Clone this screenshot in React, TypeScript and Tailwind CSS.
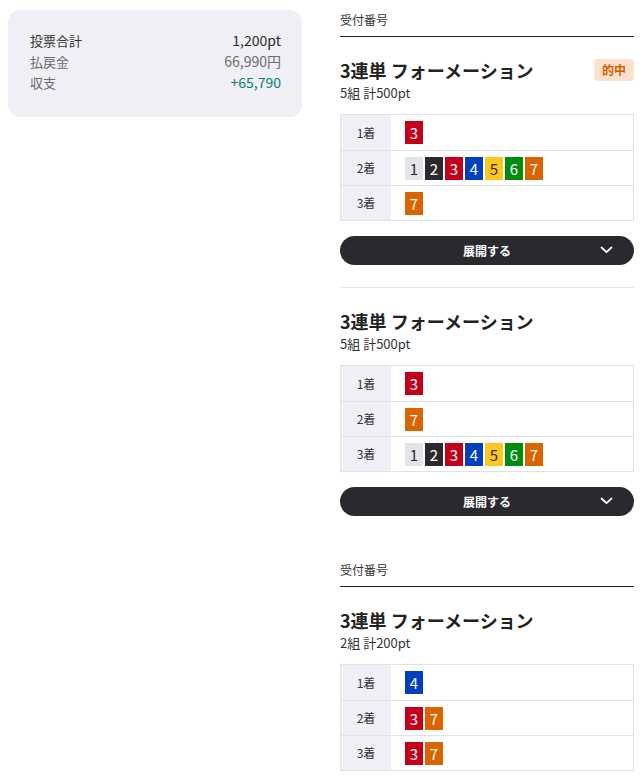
import React from "react";

const boxStyles: Record<number, string> = {
  1: "bg-[#e3e3e8] text-[#2a2a2e]",
  2: "bg-[#2a2a2e] text-white",
  3: "bg-[#c4001b] text-white",
  4: "bg-[#0040bf] text-white",
  5: "bg-[#fac81e] text-[#2a2a2e]",
  6: "bg-[#008c0c] text-white",
  7: "bg-[#d96400] text-white",
};

function Box({ n }: { n: number }) {
  return (
    <span
      className={`flex h-[23px] w-[18px] items-center justify-center text-[15px] leading-none ${boxStyles[n]}`}
    >
      {n}
    </span>
  );
}

function Table({ rows }: { rows: number[][] }) {
  return (
    <div className="mt-3 border border-[#e1e1e8]">
      {rows.map((r, i) => (
        <div
          key={i}
          className={`flex h-[35px] ${i > 0 ? "border-t border-[#e1e1e8]" : ""}`}
        >
          <div className="flex w-[50px] items-center justify-center bg-[#f0eff5] text-[12px] text-[#333]">
            {i + 1}着
          </div>
          <div className="flex items-center gap-[2px] pl-[14px]">
            {r.map((n) => (
              <Box key={n} n={n} />
            ))}
          </div>
        </div>
      ))}
    </div>
  );
}

function ExpandButton() {
  return (
    <div className="relative mt-[15px] flex h-[29px] items-center justify-center rounded-full bg-[#2a2a2e] text-[12px] font-bold text-white">
      展開する
      <svg
        className="absolute right-[21px] top-[9px]"
        width="13"
        height="10"
        viewBox="0 0 13 10"
        fill="none"
      >
        <path d="M1.5 2.5 L6.5 7.2 L11.5 2.5" stroke="white" strokeWidth="1.8" strokeLinecap="round" strokeLinejoin="round" />
      </svg>
    </div>
  );
}

function Bet({ sub, rows, hit }: { sub: string; rows: number[][]; hit?: boolean }) {
  return (
    <div>
      <div className="mt-5 flex items-center justify-between">
        <div className="text-[18px] font-bold leading-[26px] text-[#222]">3連単 フォーメーション</div>
        {hit && (
          <span className="flex h-[22px] w-[40px] items-center justify-center rounded-[4px] bg-[#fde1cc] text-[12px] font-bold text-[#d45a00]">
            的中
          </span>
        )}
      </div>
      <div className="mt-px text-[13px] leading-[18px] text-[#333]">{sub}</div>
      <Table rows={rows} />
    </div>
  );
}

function Receipt({ children }: { children: React.ReactNode }) {
  return (
    <div>
      <div className="border-b border-[#222] pb-[7px] text-[12px] leading-[19px] text-[#333]">受付番号</div>
      {children}
    </div>
  );
}

export default function App() {
  const all = [1, 2, 3, 4, 5, 6, 7];
  return (
    <div
      className="flex gap-[38px] bg-white pl-2 pr-[7px]"
      style={{ fontFamily: '"Noto Sans CJK JP", "Noto Sans", sans-serif' }}
    >
      <div className="mt-[10px] h-[107px] w-[294px] shrink-0 rounded-xl bg-[#f0eff5] pl-[22px] pr-[21px] pt-5">
        <div className="flex items-center justify-between text-[13px] leading-[21px] text-[#333]">
          <span>投票合計</span>
          <span className="text-[14px] text-[#2a2a2e]">1,200pt</span>
        </div>
        <div className="flex items-center justify-between text-[13px] leading-[21px] text-[#6b6b70]">
          <span>払戻金</span>
          <span className="text-[14px]">66,990円</span>
        </div>
        <div className="flex items-center justify-between text-[13px] leading-[21px] text-[#6b6b70]">
          <span>収支</span>
          <span className="text-[14px] text-[#008577]">+65,790</span>
        </div>
      </div>
      <div className="w-[294px] shrink-0 pt-[10px]">
        <Receipt>
          <Bet sub="5組 計500pt" rows={[[3], all, [7]]} hit />
          <ExpandButton />
          <div className="mt-[22px] border-t border-[#e6e6ea]" />
          <Bet sub="5組 計500pt" rows={[[3], [7], all]} />
          <ExpandButton />
        </Receipt>
        <div className="mt-[44px]">
          <Receipt>
            <Bet sub="2組 計200pt" rows={[[4], [3, 7], [3, 7]]} />
          </Receipt>
        </div>
      </div>
    </div>
  );
}
